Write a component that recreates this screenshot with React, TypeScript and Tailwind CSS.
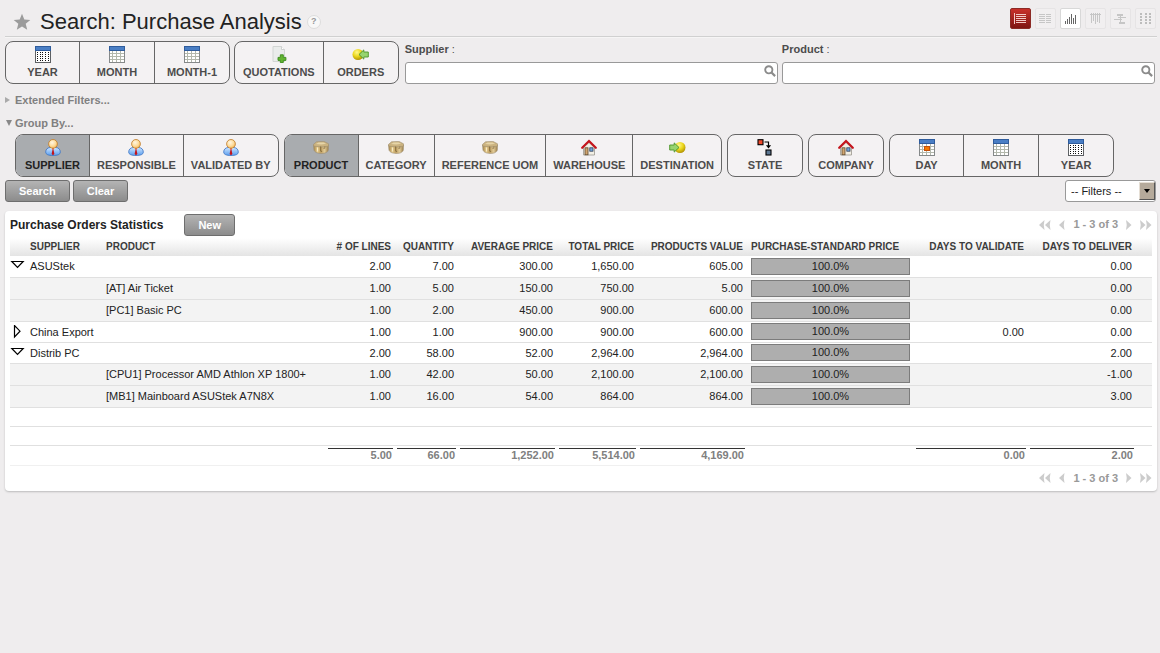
import { Fragment, useId, useState } from "react";
import type { ReactNode } from "react";

/* ---------- icons ---------- */

type CalendarKind = "year" | "month" | "day";

function CalendarIcon({ kind }: { kind: CalendarKind }) {
  return (
    <svg width="16" height="17" viewBox="0 0 16 17" shapeRendering="crispEdges" aria-hidden="true">
      <rect x="0" y="0" width="16" height="17" fill={kind === "year" ? "#5d6063" : "#85898a"} />
      <rect x="1" y="4" width="14" height="12" fill="#fff" />
      <rect x="0" y="0" width="16" height="5" fill="#2f5c9c" />
      <rect x="1" y="1" width="14" height="3" fill="#4a7ec4" />
      {kind === "year" ? (
        <g fill="#111">
          {[6, 8, 10, 12, 14].map((y) =>
            [2, 5, 7, 10, 13].map((x) => <rect key={`${x}-${y}`} x={x} y={y} width="1" height="1" />),
          )}
        </g>
      ) : (
        <g fill="#b3b8ac">
          {[4, 8, 12].map((x) => (
            <rect key={x} x={x - 1} y="5" width="1" height="11" />
          ))}
          {[7, 10, 13].map((y) => (
            <rect key={y} x="1" y={y} width="14" height="1" />
          ))}
        </g>
      )}
      {kind === "day" && <rect x="5" y="7" width="5" height="4" fill="#f57900" stroke="#c4500a" />}
    </svg>
  );
}

function PersonIcon() {
  const id = useId();
  return (
    <svg width="16" height="17" viewBox="0 0 16 17" aria-hidden="true">
      <defs>
        <linearGradient id={id} x1="0" y1="0" x2="0" y2="1">
          <stop offset="0" stopColor="#cfe6ff" />
          <stop offset="1" stopColor="#5a9eee" />
        </linearGradient>
        <radialGradient id={`${id}f`} cx="0.4" cy="0.35" r="0.8">
          <stop offset="0" stopColor="#fff6e2" />
          <stop offset=".5" stopColor="#fddc9c" />
          <stop offset="1" stopColor="#f0a63c" />
        </radialGradient>
      </defs>
      <path d="M.7 13c0-2.900 2-4.200 4.300-4.500h6c2.300.3 4.300 1.600 4.300 4.500 0 2.600-3 3.500-7.300 3.500S.7 15.600.7 13z" fill={`url(#${id})`} stroke="#3b74c4" strokeWidth=".8" />
      <path d="M5.200 8.600 8 11.300l2.800-2.700z" fill="#fff" />
      <path d="M7.100 9.200h1.800l-.4 1.500.9 4.200L8 16.300l-1.400-1.400.9-4.200z" fill="#c3141c" />
      <circle cx="8" cy="4.900" r="4.400" fill={`url(#${id}f)`} stroke="#bf7a26" strokeWidth=".8" />
    </svg>
  );
}

function BoxIcon() {
  const id = useId();
  return (
    <svg width="16" height="13" viewBox="0 0 16 13" aria-hidden="true">
      <defs>
        <linearGradient id={id} x1="0" y1="0" x2="1" y2="0">
          <stop offset="0" stopColor="#a3844b" />
          <stop offset=".25" stopColor="#e3c888" />
          <stop offset=".5" stopColor="#c0a064" />
          <stop offset=".75" stopColor="#e2cc98" />
          <stop offset="1" stopColor="#9a7f4c" />
        </linearGradient>
      </defs>
      <path d="M.6 4 8 5.200l7.400-1.200v4.600c0 2.400-3.200 3.900-6.900 3.900C4.200 12.500 1.200 11 .9 8.600z" fill={`url(#${id})`} stroke="#a08f6e" strokeWidth=".6" />
      <path d="M.5 3.400 3.500.8 11 .4l4.500 2.400v2.400L8.800 6 .8 5.200z" fill="#cbb380" stroke="#a08f6e" strokeWidth=".6" />
      <path d="m3 3 2.500-1.400 5-.2 2.600 1.400-5 .7z" fill="#e6d5a8" />
      <path d="M4.500 6.500v4" stroke="#f8ebc5" strokeWidth="1.200" />
      <path d="M7.700 5.500v4.700l1.400.2" fill="none" stroke="#7d6538" strokeWidth=".9" />
      <path d="M10.300 7.300h1.500V5.400" fill="none" stroke="#8d754a" strokeWidth=".8" />
    </svg>
  );
}

function HouseIcon() {
  return (
    <svg width="16" height="17" viewBox="0 0 16 17" aria-hidden="true">
      <path d="M2.500 8.500 8 3.500l5.500 5v7.500h-11z" fill="#f2efe4" stroke="#9a988f" strokeWidth=".8" />
      <rect x="4" y="8.800" width="3" height="7" fill="#d0a56f" stroke="#5f4a30" strokeWidth=".8" />
      <rect x="8.800" y="8.800" width="3.200" height="3.400" fill="#6ea6de" stroke="#333f58" strokeWidth=".8" />
      <path d="M1.200 8.800 8 2l6.800 6.800" fill="none" stroke="#c4141c" strokeWidth="2.200" strokeLinecap="round" />
    </svg>
  );
}

function DocumentAddIcon() {
  return (
    <svg width="16" height="17" viewBox="0 0 16 17" aria-hidden="true">
      <path d="M2 .5h8.500l3 3V15.500H2z" fill="#eaeceb" stroke="#d2d5d3" />
      <path d="M10.500.5v3h3" fill="#fff" stroke="#c5c8c6" strokeWidth=".8" />
      <path d="M9.300 8.800h3v2.600h2.600v3h-2.600v2.100h-3v-2.100H7v-3h2.300z" fill="#62b531" stroke="#3b8a1c" strokeWidth=".9" />
    </svg>
  );
}

function BallArrowIcon({ flip }: { flip?: boolean }) {
  const id = useId();
  return (
    <svg width="17" height="13" viewBox="0 0 17 13" aria-hidden="true">
      <defs>
        <radialGradient id={id} cx=".4" cy=".3" r=".75">
          <stop offset="0" stopColor="#fff98c" />
          <stop offset=".5" stopColor="#ecd71c" />
          <stop offset="1" stopColor="#ab8b00" />
        </radialGradient>
      </defs>
      {flip ? (
        <>
          <circle cx="11" cy="6.500" r="5.500" fill={`url(#${id})`} />
          <path d="M.7 4h4.500V1.900L10 6.500l-4.800 4.600V9H.7z" fill="#97d46f" stroke="#4b9428" strokeWidth=".9" />
        </>
      ) : (
        <>
          <circle cx="6" cy="6.500" r="5.500" fill={`url(#${id})`} />
          <path d="M16.300 4h-4.500V1.900L7 6.500l4.800 4.600V9h4.500z" fill="#97d46f" stroke="#4b9428" strokeWidth=".9" />
        </>
      )}
    </svg>
  );
}

function StateIcon() {
  return (
    <svg width="16" height="17" viewBox="0 0 16 17" aria-hidden="true">
      <rect x="1" y=".7" width="5" height="5" fill="#ef4a2c" stroke="#000" strokeWidth="1.100" />
      <rect x="9" y="11" width="5" height="5" fill="#5d7893" stroke="#000" strokeWidth="1.100" />
      <path d="M7.500 3h4v4" fill="none" stroke="#000" strokeWidth="1.200" />
      <path d="M8.900 6.300h5.200L11.500 9.500z" />
    </svg>
  );
}

function StarIcon() {
  return (
    <svg width="18" height="18" viewBox="0 0 18 18" aria-hidden="true">
      <path d="m9 .8 2.300 5.600 6 .5-4.600 3.900 1.500 5.900L9 13.500l-5.200 3.200 1.500-5.900L.7 6.900l6-.5z" fill="#9b9b9b" />
    </svg>
  );
}

function SearchIcon() {
  return (
    <svg width="12" height="12" viewBox="0 0 12 12" aria-hidden="true">
      <circle cx="4.800" cy="4.800" r="3.600" fill="none" stroke="#8b8b8b" strokeWidth="1.900" />
      <path d="m7.500 7.500 3.600 3.600" stroke="#8b8b8b" strokeWidth="2.200" />
    </svg>
  );
}

type ViewKind = "list" | "form" | "graph" | "calendar" | "gantt" | "diagram";

function ViewIcon({ kind }: { kind: ViewKind }) {
  return (
    <svg width="13" height="13" viewBox="0 0 13 13" shapeRendering="crispEdges" fill="currentColor" aria-hidden="true">
      {kind === "list" && (
        <>
          <rect x="0" y="1" width="1" height="11" />
          {[2, 4, 6, 8, 10].map((y) => (
            <rect key={y} x="2" y={y} width="10" height="1" />
          ))}
        </>
      )}
      {kind === "form" &&
        [2, 4, 6, 8, 10].map((y) => (
          <Fragment key={y}>
            <rect x="0" y={y} width="6" height="1" />
            <rect x="7" y={y} width="5" height="1" />
          </Fragment>
        ))}
      {kind === "graph" &&
        [[1, 9], [3, 7], [5, 5], [7, 2], [9, 6], [11, 3]].map(([x, y]) => (
          <rect key={x} x={x} y={y} width="1" height={12 - y} />
        ))}
      {kind === "calendar" && (
        <>
          <rect x="1" y="2" width="11" height="1" />
          {[[2, 10], [4, 8], [6, 11], [8, 9], [10, 10]].map(([x, h]) => (
            <rect key={x} x={x} y="1" width="1" height={h} />
          ))}
        </>
      )}
      {kind === "gantt" && (
        <>
          <rect x="3" y="2" width="6" height="2" />
          <rect x="6" y="4" width="1" height="6" />
          <rect x="4" y="5" width="8" height="1" />
          <rect x="0" y="7" width="8" height="1" />
          <rect x="5" y="10" width="6" height="2" />
        </>
      )}
      {kind === "diagram" &&
        [1, 4, 7, 10].map((y) =>
          [1, 6, 10].map((x) => <rect key={`${x}-${y}`} x={x} y={y} width="2" height="2" />),
        )}
    </svg>
  );
}

function PageArrow({ double, forward }: { double?: boolean; forward?: boolean }) {
  return (
    <svg width={double ? 12 : 6} height="10" viewBox={double ? "0 0 12 10" : "0 0 6 10"} fill="currentColor" aria-hidden="true">
      {forward ? (
        <>
          <path d="M0 0q1.500 5 0 10l5.500-5z" />
          {double && <path d="M6 0q1.500 5 0 10l5.500-5z" />}
        </>
      ) : (
        <>
          <path d="M5.500 0q-1.500 5 0 10L0 5z" />
          {double && <path d="M11.500 0q-1.500 5 0 10L6 5z" />}
        </>
      )}
    </svg>
  );
}

/* ---------- controls ---------- */

interface FilterItem {
  label: string;
  icon: ReactNode;
  active?: boolean;
}

function FilterGroup({ items, roomy }: { items: FilterItem[]; roomy?: boolean }) {
  return (
    <div className="flex shrink-0 overflow-hidden rounded-lg border border-[#666] bg-[#f4f2f3]">
      {items.map((item) => (
        <FilterButton key={item.label} {...item} roomy={roomy} />
      ))}
    </div>
  );
}

function FilterButton({ label, icon, active, roomy }: FilterItem & { roomy?: boolean }) {
  const [on, setOn] = useState(Boolean(active));
  return (
    <button
      type="button"
      aria-pressed={on}
      onClick={() => setOn(!on)}
      className={`flex h-[41px] min-w-[75px] flex-col items-center border-r border-[#666] text-[11px] leading-[14px] font-bold whitespace-nowrap uppercase first:min-w-[74px] last:min-w-[74px] last:border-r-0 ${
        roomy ? "px-2" : "px-[7px]"
      } ${on ? "bg-[#a9acaf] text-[#222]" : "text-[#4c4c4c]"}`}
    >
      <span className="flex h-[23px] items-center pt-[2px]">{icon}</span>
      {label}
    </button>
  );
}

function ActionButton({ children }: { children: ReactNode }) {
  return (
    <button
      type="button"
      className="h-[22px] rounded-[3px] border border-[#6e6e6e] bg-linear-to-b from-[#b4b4b4] to-[#8c8c8c] px-[13px] text-[11px] leading-[18px] font-bold text-white"
    >
      {children}
    </button>
  );
}

function LookupField({ id, label }: { id: string; label: string }) {
  return (
    <div className="flex min-w-0 flex-1 flex-col">
      <label htmlFor={id} className="h-[21px] pt-px text-[11px] leading-[15px] font-bold text-[#4c4c4c]">
        {label} <span className="font-normal">:</span>
      </label>
      <div className="flex h-[22px] items-start rounded-[3px] border border-[#999] bg-white pr-px">
        <input id={id} type="text" className="h-5 min-w-0 flex-1 px-1 text-[11px] outline-none" />
        <button type="button" aria-label={`Find ${label}`} className="pt-[2px]">
          <SearchIcon />
        </button>
      </div>
    </div>
  );
}

function Pager() {
  return (
    <nav aria-label="Pages" className="flex items-center gap-2 text-[11px] font-bold text-[#999]">
      <button type="button" aria-label="First" className="text-[#ccc]"><PageArrow double /></button>
      <button type="button" aria-label="Previous" className="text-[#ccc]"><PageArrow /></button>
      <span>1 - 3 of 3</span>
      <button type="button" aria-label="Next" className="text-[#ccc]"><PageArrow forward /></button>
      <button type="button" aria-label="Last" className="text-[#ccc]"><PageArrow double forward /></button>
    </nav>
  );
}

/* ---------- data ---------- */

const periodFilters: FilterItem[] = [
  { label: "Year", icon: <CalendarIcon kind="year" /> },
  { label: "Month", icon: <CalendarIcon kind="month" /> },
  { label: "Month-1", icon: <CalendarIcon kind="month" /> },
];

const documentFilters: FilterItem[] = [
  { label: "Quotations", icon: <DocumentAddIcon /> },
  { label: "Orders", icon: <BallArrowIcon /> },
];

const groupings: FilterItem[][] = [
  [
    { label: "Supplier", icon: <PersonIcon />, active: true },
    { label: "Responsible", icon: <PersonIcon /> },
    { label: "Validated by", icon: <PersonIcon /> },
  ],
  [
    { label: "Product", icon: <BoxIcon />, active: true },
    { label: "Category", icon: <BoxIcon /> },
    { label: "Reference UOM", icon: <BoxIcon /> },
    { label: "Warehouse", icon: <HouseIcon /> },
    { label: "Destination", icon: <BallArrowIcon flip /> },
  ],
  [{ label: "State", icon: <StateIcon /> }],
  [{ label: "Company", icon: <HouseIcon /> }],
  [
    { label: "Day", icon: <CalendarIcon kind="day" /> },
    { label: "Month", icon: <CalendarIcon kind="month" /> },
    { label: "Year", icon: <CalendarIcon kind="year" /> },
  ],
];

const views: { kind: ViewKind; style: string }[] = [
  { kind: "list", style: "border-[#8c2a25] bg-linear-to-b from-[#c9302a] to-[#7f1512] text-[#f3c9c6]" },
  { kind: "form", style: "border-[#e6e4e5] bg-[#f1eff0] text-[#c6c6c6]" },
  { kind: "graph", style: "border-[#d8d8d8] bg-white text-[#666]" },
  { kind: "calendar", style: "border-[#e6e4e5] bg-[#f1eff0] text-[#c6c6c6]" },
  { kind: "gantt", style: "border-[#e6e4e5] bg-[#f1eff0] text-[#c6c6c6]" },
  { kind: "diagram", style: "border-[#e6e4e5] bg-[#f1eff0] text-[#bdbdbd]" },
];

interface Row {
  supplier?: string;
  product?: string;
  open?: boolean;
  values: string[];
  validate?: string;
  deliver: string;
}

const rows: Row[] = [
  { supplier: "ASUStek", open: true, values: ["2.00", "7.00", "300.00", "1,650.00", "605.00"], deliver: "0.00" },
  { product: "[AT] Air Ticket", values: ["1.00", "5.00", "150.00", "750.00", "5.00"], deliver: "0.00" },
  { product: "[PC1] Basic PC", values: ["1.00", "2.00", "450.00", "900.00", "600.00"], deliver: "0.00" },
  { supplier: "China Export", values: ["1.00", "1.00", "900.00", "900.00", "600.00"], validate: "0.00", deliver: "0.00" },
  { supplier: "Distrib PC", open: true, values: ["2.00", "58.00", "52.00", "2,964.00", "2,964.00"], deliver: "2.00" },
  { product: "[CPU1] Processor AMD Athlon XP 1800+", values: ["1.00", "42.00", "50.00", "2,100.00", "2,100.00"], deliver: "-1.00" },
  { product: "[MB1] Mainboard ASUStek A7N8X", values: ["1.00", "16.00", "54.00", "864.00", "864.00"], deliver: "3.00" },
];

const numberHeads = ["# of Lines", "Quantity", "Average Price", "Total Price", "Products Value"];
const totals = ["5.00", "66.00", "1,252.00", "5,514.00", "4,169.00", "", "0.00", "2.00"];

function StatisticsTable() {
  return (
    <table className="w-full table-fixed border-collapse text-[11px] leading-[14px] whitespace-nowrap text-[#222]">
      <colgroup>
        <col className="w-4" />
        <col className="w-[76px]" />
        <col />
        <col className="w-[69px]" />
        <col className="w-[63px]" />
        <col className="w-[99px]" />
        <col className="w-[81px]" />
        <col className="w-[109px]" />
        <col className="w-[167px]" />
        <col className="w-[114px]" />
        <col className="w-[108px]" />
        <col className="w-4" />
      </colgroup>
      <thead>
        <tr className="h-[18px] bg-linear-to-b from-white to-[#e4e4e4] text-[10px] text-[#3c3c3c] uppercase">
          <th />
          <th className="px-1 pb-px text-left">Supplier</th>
          <th className="px-1 pb-px text-left">Product</th>
          {numberHeads.map((head) => (
            <th key={head} className="px-1 pb-px text-right">{head}</th>
          ))}
          <th className="px-1 pb-px text-left">Purchase-Standard Price</th>
          <th className="px-1 pb-px text-right">Days to Validate</th>
          <th className="px-1 pb-px text-right">Days to Deliver</th>
          <th />
        </tr>
      </thead>
      <tbody>
        {rows.map((row) => (
          <tr
            key={row.supplier ?? row.product}
            className={`border-b border-[#e0e0e0] ${row.supplier ? "h-[21px]" : "h-[22px] bg-[#f3f3f3]"}`}
          >
            <td>
              {row.supplier && (
                <button type="button" aria-label={`Toggle ${row.supplier}`} aria-expanded={Boolean(row.open)} className="block">
                  <svg width="16" height="14" viewBox="0 0 16 14" fill="#fff" stroke="#000" strokeWidth="1.200" aria-hidden="true">
                    <path d={row.open ? "M1.800 2.500h11.400L7.500 8.500z" : "M4.500 .5v11.500l5.500-5.800z"} />
                  </svg>
                </button>
              )}
            </td>
            <td className="px-1">{row.supplier}</td>
            <td className="px-1">{row.product}</td>
            {row.values.map((value, i) => (
              <td key={numberHeads[i]} className="px-1 text-right">{value}</td>
            ))}
            <td className="px-1">
              <div className="h-[17px] border border-[#7c7c7c] bg-[#aeaeae] text-center leading-[15px]">100.0%</div>
            </td>
            <td className="px-1 text-right">{row.validate}</td>
            <td className="px-1 text-right">{row.deliver}</td>
            <td />
          </tr>
        ))}
        {["spacer-1", "spacer-2"].map((key) => (
          <tr key={key} className="h-[19px] border-b border-[#e0e0e0]">
            <td colSpan={12} />
          </tr>
        ))}
      </tbody>
      <tfoot>
        <tr className="h-5 border-b border-[#f0f0f0] font-bold text-[#808080]">
          <td colSpan={3} />
          {totals.map((total, i) => (
            <td key={i} className="px-[2px] text-right align-top">
              {total && <div className="mt-[2px] border-t border-[#333] pr-px leading-[13px]">{total}</div>}
            </td>
          ))}
          <td />
        </tr>
      </tfoot>
    </table>
  );
}

/* ---------- page ---------- */

export default function App() {
  return (
    <main className="min-h-screen bg-[#efedee] pr-[3px] pl-[5px] font-['Liberation_Sans',Arial,sans-serif]">
      <header className="flex h-[37px] items-center border-b border-[#d0d0d0] pr-px pl-2 shadow-[0_1px_0_#f6f5f5]">
        <button type="button" aria-label="Add to shortcuts" className="pt-2">
          <StarIcon />
        </button>
        <h1 className="pt-2 pl-[9px] text-[22px] leading-7 text-[#222]">Search: Purchase Analysis</h1>
        <a
          href="#help"
          aria-label="Help"
          className="mt-2 ml-[5px] flex size-[14px] items-center justify-center rounded-full border border-[#ddd] bg-[#f8f8f8] text-[9px] font-bold text-[#999]"
        >
          ?
        </a>
        <div className="ml-auto flex gap-1">
          {views.map((view) => (
            <button
              key={view.kind}
              type="button"
              aria-label={`${view.kind} view`}
              className={`flex size-[21px] items-center justify-center rounded-[2px] border ${view.style}`}
            >
              <ViewIcon kind={view.kind} />
            </button>
          ))}
        </div>
      </header>

      <section aria-label="Filters" className="flex gap-1 pt-1 pr-[2px]">
        <FilterGroup items={periodFilters} roomy />
        <FilterGroup items={documentFilters} roomy />
        <div className="flex flex-1 gap-1 pl-[2px]">
          <LookupField id="supplier" label="Supplier" />
          <LookupField id="product" label="Product" />
        </div>
      </section>

      <button type="button" className="mt-2 flex h-4 items-center gap-[5px] text-[11px] font-bold text-[#808080]">
        <svg width="5" height="6" viewBox="0 0 5 6" aria-hidden="true">
          <path d="M0 0v6l5-3z" fill="#aaa" />
        </svg>
        Extended Filters...
      </button>
      <button type="button" className="mt-[7px] flex h-4 items-center gap-[3px] pl-px text-[11px] font-bold text-[#808080]">
        <svg width="6" height="6" viewBox="0 0 6 6" aria-hidden="true">
          <path d="M0 0h6L3 6z" fill="#888" />
        </svg>
        Group By...
      </button>
      <section aria-label="Group by" className="mt-[3px] flex gap-[5px] pl-[10px]">
        {groupings.map((items) => (
          <FilterGroup key={items[0].label} items={items} />
        ))}
      </section>

      <div className="mt-[3px] flex items-center gap-[3px] pr-px">
        <ActionButton>Search</ActionButton>
        <ActionButton>Clear</ActionButton>
        <div className="relative ml-auto">
          <select
            aria-label="Saved filters"
            className="block h-[22px] w-[91px] appearance-none rounded-[3px] border border-[#999] bg-white pl-[5px] text-[11px] text-[#222]"
          >
            <option>-- Filters --</option>
          </select>
          <span className="pointer-events-none absolute top-[2px] right-px flex h-[18px] w-4 items-center justify-center border border-t-[#e6dfd5] border-r-[#555] border-b-[#555] border-l-[#e6dfd5] bg-[#b5aa9b]">
            <svg width="6" height="4" viewBox="0 0 6 4" aria-hidden="true">
              <path d="M0 0h6L3 4z" />
            </svg>
          </span>
        </div>
      </div>

      <section aria-label="Purchase Orders Statistics" className="mt-[9px] rounded-[4px] bg-white px-[5px] shadow-[0_1px_2px_#bbb]">
        <div className="flex h-[27px] items-center gap-[21px]">
          <h2 className="text-[12px] font-bold text-[#222]">Purchase Orders Statistics</h2>
          <ActionButton>New</ActionButton>
          <div className="ml-auto">
            <Pager />
          </div>
        </div>
        <StatisticsTable />
        <div className="flex h-[25px] items-center justify-end">
          <Pager />
        </div>
      </section>
    </main>
  );
}
